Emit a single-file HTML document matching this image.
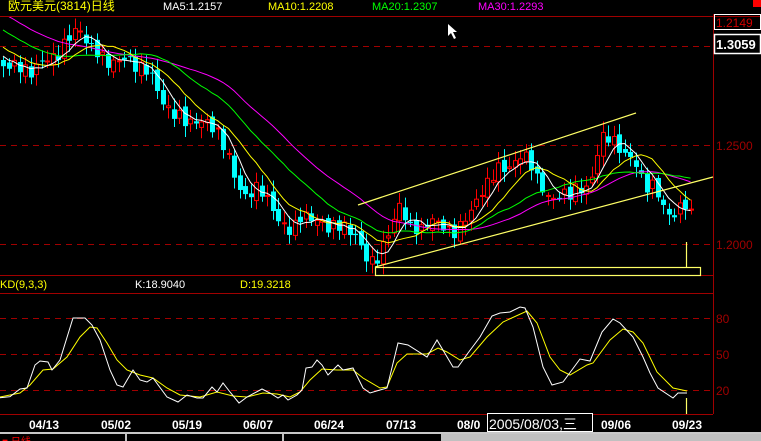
<!DOCTYPE html>
<html><head><meta charset="utf-8"><style>
html,body{margin:0;padding:0;background:#000;width:761px;height:441px;overflow:hidden}
svg{display:block}
text{font-family:"Liberation Sans","Noto Sans CJK SC",sans-serif}
</style></head><body>
<svg id="s" width="761" height="441" xmlns="http://www.w3.org/2000/svg">
<rect width="761" height="441" fill="#000"/>
<defs><clipPath id="cp"><rect x="0" y="17" width="712" height="258"/></clipPath></defs>
<text x="8" y="10" fill="#ffff00" font-size="12">欧元美元(3814)日线</text>
<text x="163" y="10" fill="#fff" font-size="11">MA5:1.2157</text>
<text x="268" y="10" fill="#ffff00" font-size="11">MA10:1.2208</text>
<text x="372" y="10" fill="#00ff00" font-size="11">MA20:1.2307</text>
<text x="478" y="10" fill="#ff00ff" font-size="11">MA30:1.2293</text>
<rect x="753" y="0" width="8" height="7" fill="#ff0000"/>
<path d="M448 24 l0 12 l3 -3 l3 6 l2 -1 l-3 -6 l4 0 z" fill="#fff"/>
<g stroke="#a00000" stroke-width="1" fill="none">
<line x1="0" y1="16.5" x2="761" y2="16.5"/>
<line x1="713.5" y1="14" x2="713.5" y2="414"/>
<line x1="0" y1="275.5" x2="713" y2="275.5"/>
<line x1="0" y1="293.5" x2="713" y2="293.5"/>
<line x1="0" y1="414.5" x2="713" y2="414.5"/>
<g stroke-dasharray="6,5">
<line x1="0" y1="46.5" x2="713" y2="46.5"/>
<line x1="0" y1="145.5" x2="713" y2="145.5"/>
<line x1="0" y1="244.5" x2="713" y2="244.5"/>
<line x1="0" y1="318.5" x2="713" y2="318.5"/>
<line x1="0" y1="354.5" x2="713" y2="354.5"/>
<line x1="0" y1="390.5" x2="713" y2="390.5"/>
</g></g>
<rect x="714.5" y="14.5" width="46" height="15" fill="none" stroke="#fff"/>
<text x="716" y="27" fill="#d00000" font-size="12">1.2149</text>
<rect x="714.5" y="34.5" width="46" height="19" fill="none" stroke="#fff" stroke-width="1.5"/>
<text x="716" y="49" fill="#fff" font-size="13" font-weight="bold">1.3059</text>
<text x="716" y="150" fill="#a00000" font-size="12">1.2500</text>
<text x="716" y="249" fill="#a00000" font-size="12">1.2000</text>
<text x="716" y="323" fill="#a00000" font-size="12">80</text>
<text x="716" y="359" fill="#a00000" font-size="12">50</text>
<text x="716" y="395" fill="#a00000" font-size="12">20</text>
<text x="0" y="288" fill="#ffff00" font-size="11">KD(9,3,3)</text>
<text x="135" y="288" fill="#fff" font-size="11">K:18.9040</text>
<text x="240" y="288" fill="#ffff00" font-size="11">D:19.3218</text>
<g id="candles" clip-path="url(#cp)"></g>
<g stroke="#ffff66" stroke-width="1.2" fill="none">
<line x1="358" y1="205" x2="636" y2="113"/>
<line x1="375" y1="267" x2="713" y2="177"/>
<rect x="375.5" y="267.5" width="325" height="8"/>
<line x1="686.5" y1="242" x2="686.5" y2="268"/>
<line x1="686.5" y1="398" x2="686.5" y2="414"/>
</g>
<g id="kd" fill="none" stroke-width="1"></g>
<g fill="#fff" font-size="12" font-weight="bold" font-family="Liberation Mono,monospace">
<text x="29" y="429">04/13</text><text x="101" y="429">05/02</text><text x="172" y="429">05/19</text>
<text x="243" y="429">06/07</text><text x="314" y="429">06/24</text><text x="386" y="429">07/13</text>
<text x="457" y="429">08/0</text><text x="601" y="429">09/06</text><text x="672" y="429">09/23</text>
</g>
<rect x="487.5" y="413.5" width="105" height="18" fill="#000" stroke="#fff"/>
<text x="489" y="429" fill="#fff" font-size="14">2005/08/03,三</text>
<rect x="0" y="432" width="761" height="2" fill="#c8c8c8"/>
<rect x="0" y="434" width="761" height="7" fill="#000"/>
<rect x="441" y="434" width="320" height="7" fill="#c0c0c0"/>
<rect x="125" y="434" width="2" height="7" fill="#c0c0c0"/>
<rect x="282" y="434" width="2" height="7" fill="#c0c0c0"/>
<text x="2" y="445" fill="#ff0000" font-size="10">■ 日线</text>
</svg>
<script>
var NS="http://www.w3.org/2000/svg";
function el(p,t,a){var e=document.createElementNS(NS,t);for(var k in a)e.setAttribute(k,a[k]);p.appendChild(e);return e;}
function interp(w,x){for(var i=0;i<w.length-1;i++){if(x<=w[i+1][0]){var a=w[i],b=w[i+1];return a[1]+(b[1]-a[1])*(x-a[0])/(b[0]-a[0]);}}return w[w.length-1][1];}
var W=[[0,62],[15,68],[30,70],[45,62],[60,50],[72,35],[80,28],[90,48],[100,58],[115,62],[130,60],[145,70],[155,85],[165,105],[175,118],[190,120],[205,125],[215,125],[225,150],[235,180],[245,195],[260,190],[270,200],[280,228],[290,230],[300,215],[310,222],[320,218],[330,230],[345,225],[355,235],[362,255],[370,262],[380,252],[390,232],[400,200],[410,230],[420,232],[430,215],[440,228],[450,232],[460,225],[470,215],[480,190],[490,180],[500,168],[510,165],[520,158],[530,160],[540,185],[550,205],[560,190],[570,195],[580,190],[590,182],[598,150],[605,135],[615,140],[625,158],[635,162],[645,185],[655,190],[665,210],[675,215],[685,205],[690,213]];
var g=document.getElementById("candles");
var closes=[],xs=[];
for(var i=0;i<30;i++){closes.push(-40+i*3.4);xs.push(null);}
var N=126,prev=60;
var cand=[];
for(var i=0;i<N;i++){
 var x=3+i*5.5;var c=interp(W,x)+Math.sin(i*2.7)*6+Math.cos(i*1.3)*3;
 var o=prev+Math.sin(i*5.1)*4;
 var h=Math.min(o,c)-3-Math.abs(Math.sin(i*3.3))*8;
 var l=Math.max(o,c)+3+Math.abs(Math.cos(i*2.1))*8;
 cand.push([x,o,c,h,l]);closes.push(c);xs.push(x);prev=c;
}
cand.forEach(function(k){
 var x=Math.round(k[0]),o=k[1],c=k[2];
 var up=c<o;var col=up?"#ff0000":"#00ffff";
 el(g,"line",{x1:x+0.5,y1:k[3],x2:x+0.5,y2:k[4],stroke:col,"stroke-width":1});
 var t=Math.min(o,c),b=Math.max(o,c);if(b-t<1)b=t+1;
 if(up)el(g,"rect",{x:x-1.5,y:t,width:4,height:b-t,fill:"#000",stroke:col,"stroke-width":1});
 else el(g,"rect",{x:x-2,y:t,width:5,height:b-t,fill:col});
});
function ma(n,col){var pts=[];for(var i=30;i<closes.length;i++){var s=0;for(var j=i-n+1;j<=i;j++)s+=closes[j];pts.push(xs[i].toFixed(1)+","+(s/n).toFixed(1));}
 el(g,"polyline",{points:pts.join(" "),stroke:col,fill:"none","stroke-width":1});}
ma(30,"#ff00ff");ma(20,"#00ff00");ma(10,"#ffff00");ma(5,"#ffffff");
var kd=document.getElementById("kd");
var K="0,397.7 10,396.7 20,389 27,388 35,365 40,361 48,362 52,370 60,360 73,318 85,318 92,325 100,340 110,370 117,385 123,387 133,370 140,380 147,382 153,378 167,397 178,402 187,395 197,398 203,398 212,387 217,392 223,383 230,392 239,403 247,397 262,389 270,393 278,398 283,395 288,400 297,395 302,390 306,368 312,367 317,360 322,365 328,375 338,365 343,370 353,368 363,388 370,393 380,390 387,388 398,343 408,345 427,357 437,340 453,367 458,367 468,353 480,337 492,316 500,313 510,312 520,307 525,308 533,327 543,367 552,385 563,382 580,359 590,361 602,332 613,319 620,323 633,337 643,357 650,373 658,388 673,398 678,393 687,393";
var D="0,397 20,393 30,385 43,370 53,369 67,357 80,337 90,327 97,328 107,343 117,360 127,370 140,375 153,378 167,388 180,395 200,397 217,392 233,396 247,397 263,393 277,394 290,397 300,392 310,380 322,369 337,370 353,370 363,378 380,388 387,387 397,363 407,354 427,354 438,348 447,352 460,360 470,357 487,337 503,322 527,311 537,323 550,357 560,370 570,375 587,365 593,363 610,340 623,329 633,332 643,343 657,372 673,388 687,391";
el(kd,"polyline",{points:D,stroke:"#ffff00"});
el(kd,"polyline",{points:K,stroke:"#ffffff"});
</script>
</body></html>
